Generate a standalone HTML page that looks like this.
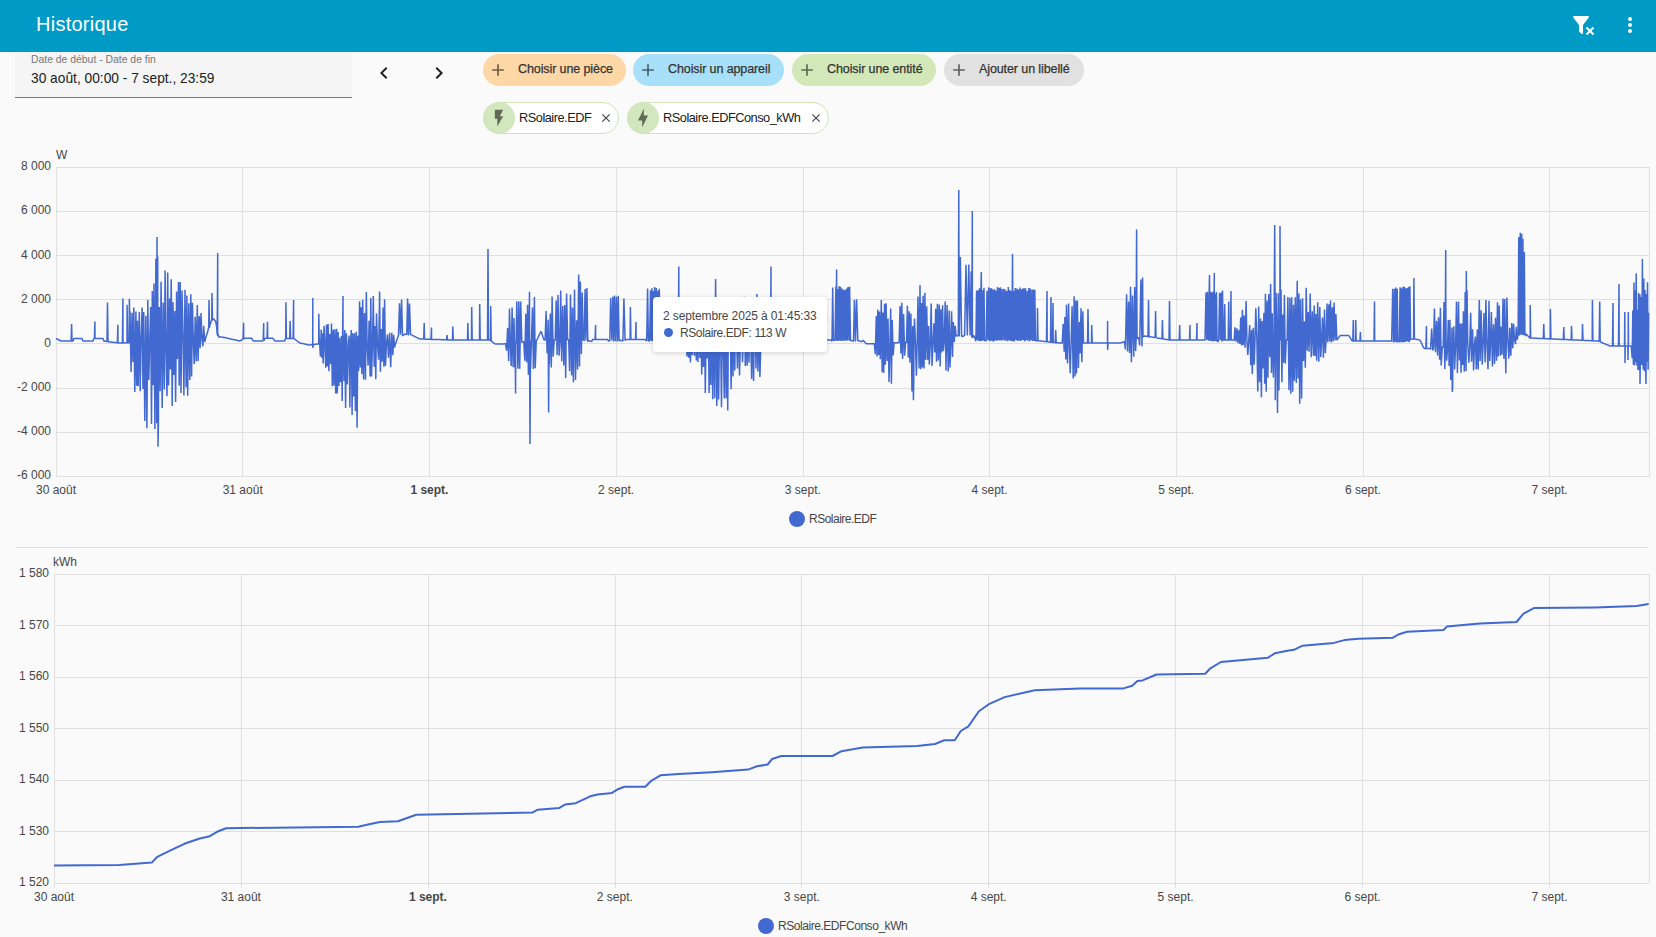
<!DOCTYPE html>
<html><head><meta charset="utf-8">
<style>
*{box-sizing:border-box}
html,body{margin:0;padding:0}
body{width:1656px;height:937px;overflow:hidden;background:#fafafa;font-family:"Liberation Sans",sans-serif;position:relative;color:#212121}
.hdr{position:absolute;left:0;top:0;width:1656px;height:52px;background:#009ac7}
.hdr .t{position:absolute;left:36px;top:12px;font-size:20px;line-height:24px;color:#fff;letter-spacing:0.25px}
.ic{position:absolute;width:24px;height:24px}
.ic svg{display:block;width:100%;height:100%}
.df{position:absolute;left:15px;top:52px;width:337px;height:46px;background:#f5f5f5;border-bottom:1px solid #7a7a7a}
.df .l{position:absolute;left:16px;top:1.5px;font-size:10.4px;color:#757575}
.df .v{position:absolute;left:16px;top:19px;font-size:13.75px;color:#212121}
.chip{position:absolute;height:32px;border-radius:16px;font-size:12.5px;line-height:31px;letter-spacing:-0.1px;color:#333;-webkit-text-stroke:0.25px #333}
svg{display:block}
.chip svg,.ent svg{width:100%;height:100%}
.chip .pl{position:absolute;left:4.8px;top:6px;width:20px;height:20px}
.chip .tx{position:absolute;left:35px;top:0}
.ent{position:absolute;height:32px;border-radius:16px;background:#fff;border:1px solid #cfe5b9;font-size:12.8px;line-height:29px;letter-spacing:-0.5px;color:#212121}
.ent .av{position:absolute;left:-1px;top:-1px;width:32px;height:32px;border-radius:16px;background:#d2e7bd}
.ent .av svg{position:absolute;left:6px;top:6px;width:20px;height:20px}
.ent .tx{position:absolute;left:35px;top:0}
.ent .x{position:absolute;top:8px;width:14px;height:14px}
svg.ch{position:absolute;left:0;top:0}
.grid line{stroke:#e0e0e0;stroke-width:1}
.lab{font-family:"Liberation Sans",sans-serif;font-size:12px;fill:#464646}
.tip{position:absolute;left:653px;top:297px;width:174px;height:55px;background:#fff;border-radius:4px;box-shadow:0 1px 5px rgba(0,0,0,.16);font-size:12px;color:#464646}
</style></head><body>
<div class="hdr">
  <div class="t">Historique</div>
  <div class="ic" style="left:1571px;top:13px"><svg viewBox="0 0 24 24"><path fill="#fff" d="M14.76,20.83L17.6,18L14.76,15.17L16.17,13.76L19,16.57L21.83,13.76L23.24,15.17L20.43,18L23.24,20.83L21.83,22.24L19,19.4L16.17,22.24L14.76,20.83M12,12V19.88C12.04,20.18 11.94,20.5 11.71,20.71C11.32,21.1 10.69,21.1 10.3,20.71L8.29,18.7C8.06,18.47 7.96,18.16 8,17.87V12H7.97L2.21,4.62C1.87,4.19 1.95,3.56 2.38,3.22C2.57,3.08 2.78,3 3,3H17C17.22,3 17.43,3.08 17.62,3.22C18.05,3.56 18.13,4.19 17.79,4.62L12.03,12H12Z"/></svg></div>
  <div class="ic" style="left:1618px;top:13px"><svg viewBox="0 0 24 24"><path fill="#fff" d="M12,16A2,2 0 0,1 14,18A2,2 0 0,1 12,20A2,2 0 0,1 10,18A2,2 0 0,1 12,16M12,10A2,2 0 0,1 14,12A2,2 0 0,1 12,14A2,2 0 0,1 10,12A2,2 0 0,1 12,10M12,4A2,2 0 0,1 14,6A2,2 0 0,1 12,8A2,2 0 0,1 10,6A2,2 0 0,1 12,4Z"/></svg></div>
</div>
<div class="df"><div class="l">Date de début - Date de fin</div><div class="v">30 août, 00:00 - 7 sept., 23:59</div></div>
<div class="ic" style="left:372px;top:60.5px"><svg viewBox="0 0 24 24"><path fill="#212121" d="M15.41,16.58L10.83,12L15.41,7.41L14,6L8,12L14,18L15.41,16.58Z"/></svg></div>
<div class="ic" style="left:427px;top:60.5px"><svg viewBox="0 0 24 24"><path fill="#212121" d="M8.59,16.58L13.17,12L8.59,7.41L10,6L16,12L10,18L8.59,16.58Z"/></svg></div>

<div class="chip" style="left:483px;top:54px;width:143px;background:#fed7a6"><div class="pl"><svg viewBox="0 0 24 24"><path fill="#6f5c43" d="M19,13H13V19H11V13H5V11H11V5H13V11H19V13Z"/></svg></div><div class="tx">Choisir une pièce</div></div>
<div class="chip" style="left:633px;top:54px;width:151px;background:#a8e0f9"><div class="pl"><svg viewBox="0 0 24 24"><path fill="#45606b" d="M19,13H13V19H11V13H5V11H11V5H13V11H19V13Z"/></svg></div><div class="tx">Choisir un appareil</div></div>
<div class="chip" style="left:792px;top:54px;width:144px;background:#d2e8b9"><div class="pl"><svg viewBox="0 0 24 24"><path fill="#5c6b50" d="M19,13H13V19H11V13H5V11H11V5H13V11H19V13Z"/></svg></div><div class="tx">Choisir une entité</div></div>
<div class="chip" style="left:944px;top:54px;width:140px;background:#e1e1e1"><div class="pl"><svg viewBox="0 0 24 24"><path fill="#5f5f5f" d="M19,13H13V19H11V13H5V11H11V5H13V11H19V13Z"/></svg></div><div class="tx">Ajouter un libellé</div></div>

<div class="ent" style="left:483px;top:102px;width:136px"><div class="av"><svg viewBox="0 0 24 24"><path fill="#5f6b55" d="M7,2V13H10V22L17,10H13L17,2H7Z"/></svg></div><div class="tx">RSolaire.EDF</div><div class="x" style="left:115px"><svg viewBox="0 0 24 24"><path fill="#444" d="M19,6.41L17.59,5L12,10.59L6.41,5L5,6.41L10.59,12L5,17.59L6.41,19L12,13.41L17.59,19L19,17.59L13.41,12L19,6.41Z"/></svg></div></div>
<div class="ent" style="left:627px;top:102px;width:202px"><div class="av"><svg viewBox="0 0 24 24"><path fill="#5f6b55" d="M11,15H6L13,1V9H18L11,23V15Z"/></svg></div><div class="tx">RSolaire.EDFConso_kWh</div><div class="x" style="left:181px"><svg viewBox="0 0 24 24"><path fill="#444" d="M19,6.41L17.59,5L12,10.59L6.41,5L5,6.41L10.59,12L5,17.59L6.41,19L12,13.41L17.59,19L19,17.59L13.41,12L19,6.41Z"/></svg></div></div>

<svg class="ch" width="1656" height="937" viewBox="0 0 1656 937">
 <g class="grid"><line x1="56" x2="1650" y1="167.50" y2="167.50"/><line x1="56" x2="1650" y1="211.50" y2="211.50"/><line x1="56" x2="1650" y1="255.50" y2="255.50"/><line x1="56" x2="1650" y1="299.50" y2="299.50"/><line x1="56" x2="1650" y1="343.50" y2="343.50"/><line x1="56" x2="1650" y1="388.50" y2="388.50"/><line x1="56" x2="1650" y1="432.50" y2="432.50"/><line x1="56" x2="1650" y1="476.50" y2="476.50"/><line x1="56.50" x2="56.50" y1="167" y2="476"/><line x1="242.50" x2="242.50" y1="167" y2="476"/><line x1="429.50" x2="429.50" y1="167" y2="476"/><line x1="616.50" x2="616.50" y1="167" y2="476"/><line x1="803.50" x2="803.50" y1="167" y2="476"/><line x1="989.50" x2="989.50" y1="167" y2="476"/><line x1="1176.50" x2="1176.50" y1="167" y2="476"/><line x1="1363.50" x2="1363.50" y1="167" y2="476"/><line x1="1549.50" x2="1549.50" y1="167" y2="476"/><line x1="1649.50" x2="1649.50" y1="167" y2="476"/><line x1="54" x2="1650" y1="574.50" y2="574.50"/><line x1="54" x2="1650" y1="625.50" y2="625.50"/><line x1="54" x2="1650" y1="677.50" y2="677.50"/><line x1="54" x2="1650" y1="728.50" y2="728.50"/><line x1="54" x2="1650" y1="780.50" y2="780.50"/><line x1="54" x2="1650" y1="831.50" y2="831.50"/><line x1="54" x2="1650" y1="883.50" y2="883.50"/><line x1="54.50" x2="54.50" y1="574" y2="888"/><line x1="241.50" x2="241.50" y1="574" y2="888"/><line x1="428.50" x2="428.50" y1="574" y2="888"/><line x1="615.50" x2="615.50" y1="574" y2="888"/><line x1="801.50" x2="801.50" y1="574" y2="888"/><line x1="988.50" x2="988.50" y1="574" y2="888"/><line x1="1175.50" x2="1175.50" y1="574" y2="888"/><line x1="1362.50" x2="1362.50" y1="574" y2="888"/><line x1="1549.50" x2="1549.50" y1="574" y2="888"/><line x1="1649.50" x2="1649.50" y1="574" y2="883"/></g>
 <line x1="15" x2="1649" y1="547.5" y2="547.5" stroke="#e0e0e0" stroke-width="1"/>
 <g class="lab"><text x="51" y="170.2" text-anchor="end">8 000</text><text x="51" y="214.3" text-anchor="end">6 000</text><text x="51" y="258.5" text-anchor="end">4 000</text><text x="51" y="302.6" text-anchor="end">2 000</text><text x="51" y="346.8" text-anchor="end">0</text><text x="51" y="390.9" text-anchor="end">-2 000</text><text x="51" y="435.1" text-anchor="end">-4 000</text><text x="51" y="479.2" text-anchor="end">-6 000</text><text x="49" y="577.2" text-anchor="end">1 580</text><text x="49" y="628.7" text-anchor="end">1 570</text><text x="49" y="680.2" text-anchor="end">1 560</text><text x="49" y="731.7" text-anchor="end">1 550</text><text x="49" y="783.2" text-anchor="end">1 540</text><text x="49" y="834.7" text-anchor="end">1 530</text><text x="49" y="886.2" text-anchor="end">1 520</text><text x="56.0" y="494" text-anchor="middle">30 août</text><text x="242.7" y="494" text-anchor="middle">31 août</text><text x="429.4" y="494" text-anchor="middle" font-weight="bold">1 sept.</text><text x="616.1" y="494" text-anchor="middle">2 sept.</text><text x="802.8" y="494" text-anchor="middle">3 sept.</text><text x="989.5" y="494" text-anchor="middle">4 sept.</text><text x="1176.2" y="494" text-anchor="middle">5 sept.</text><text x="1362.9" y="494" text-anchor="middle">6 sept.</text><text x="1549.6" y="494" text-anchor="middle">7 sept.</text><text x="54.0" y="901" text-anchor="middle">30 août</text><text x="240.9" y="901" text-anchor="middle">31 août</text><text x="427.9" y="901" text-anchor="middle" font-weight="bold">1 sept.</text><text x="614.8" y="901" text-anchor="middle">2 sept.</text><text x="801.8" y="901" text-anchor="middle">3 sept.</text><text x="988.7" y="901" text-anchor="middle">4 sept.</text><text x="1175.6" y="901" text-anchor="middle">5 sept.</text><text x="1362.6" y="901" text-anchor="middle">6 sept.</text><text x="1549.5" y="901" text-anchor="middle">7 sept.</text>
  <text x="56" y="159">W</text>
  <text x="53" y="566">kWh</text>
  <text x="809" y="523" letter-spacing="-0.5">RSolaire.EDF</text>
  <text x="778" y="930" letter-spacing="-0.45">RSolaire.EDFConso_kWh</text>
 </g>
 <circle cx="797" cy="519" r="8" fill="#4269d0"/>
 <circle cx="766" cy="926" r="8" fill="#4269d0"/>
 <polyline fill="none" stroke="#4269d0" stroke-width="1.5" stroke-linejoin="miter" stroke-miterlimit="2" points="56.0,338.5 57.0,339.0 58.0,339.5 59.0,340.0 60.0,340.5 61.0,341.0 62.0,341.0 63.0,341.0 64.0,341.0 65.0,341.0 66.0,341.0 67.0,341.0 68.0,341.0 69.0,341.0 70.0,341.0 71.0,341.0 71.1,341.0 71.6,324.0 72.0,341.0 72.1,341.0 73.0,341.0 74.0,338.5 75.0,338.5 76.0,338.5 77.0,338.5 78.0,338.5 79.0,338.5 80.0,338.5 81.0,338.5 82.0,338.5 83.0,341.0 84.0,341.0 85.0,341.0 86.0,341.0 87.0,341.0 88.0,341.0 89.0,341.0 90.0,341.0 91.0,341.0 92.0,341.0 93.0,341.0 94.0,338.5 94.4,338.5 94.9,321.4 95.0,338.5 95.4,338.5 96.0,338.5 97.0,338.5 98.0,338.5 99.0,338.5 100.0,338.5 101.0,338.5 102.0,338.5 103.0,338.5 104.0,341.0 105.0,341.2 106.0,341.3 107.0,341.5 107.0,341.6 107.5,302.4 108.0,341.6 108.0,341.7 109.0,341.8 110.0,342.0 111.0,342.1 112.0,342.2 113.0,342.3 114.0,342.4 115.0,342.5 116.0,342.6 117.0,342.7 117.4,342.8 117.9,324.8 118.0,342.8 118.4,342.8 119.0,342.9 120.0,343.0 121.0,343.0 122.0,342.9 122.4,342.9 122.9,298.4 123.0,342.9 123.4,342.9 124.0,342.9 125.0,342.8 126.0,342.8 126.6,342.7 127.0,342.8 127.1,304.8 127.6,342.7 128.0,342.7 128.9,342.7 129.0,342.7 129.4,298.8 129.9,342.7 130.0,311.2 131.1,371.9 132.0,312.7 133.0,361.9 133.8,307.4 134.8,391.9 135.9,311.5 136.7,385.8 137.5,320.7 138.2,386.3 139.3,311.9 140.2,391.3 141.0,342.3 142.1,307.4 143.0,389.1 143.7,312.0 144.8,421.1 145.8,315.8 146.9,428.2 147.8,300.0 148.8,379.9 149.7,342.0 150.7,306.9 151.5,424.1 152.3,290.9 153.1,385.2 154.0,283.4 154.9,429.0 155.9,258.7 156.5,341.7 156.7,423.2 157.0,237.0 157.5,341.7 157.5,341.7 157.7,256.4 158.0,446.7 158.5,418.7 158.5,341.7 159.3,307.1 160.1,391.2 161.1,281.8 162.2,407.9 163.2,302.5 164.3,389.6 165.1,270.4 165.9,341.4 167.0,396.3 167.7,272.5 168.6,385.6 169.6,298.6 170.4,369.6 171.2,279.2 172.2,406.0 173.0,301.9 173.9,375.0 174.8,310.9 175.6,402.1 176.6,291.6 177.4,359.1 178.5,281.9 179.2,385.8 180.2,282.0 181.0,392.9 182.0,290.5 183.1,340.8 183.9,395.6 185.0,289.7 186.1,387.3 186.9,295.5 187.7,395.7 188.8,303.2 189.8,380.0 190.8,294.3 191.6,376.4 192.4,302.8 193.3,340.4 194.2,364.1 195.2,316.7 196.2,361.5 197.3,305.1 198.1,361.1 199.2,315.9 200.1,348.3 201.0,313.1 202.0,340.1 202.9,346.3 203.7,325.8 204.7,342.0 205.7,337.8 206.7,334.8 207.7,331.8 208.5,328.0 208.7,328.8 209.0,300.0 209.5,328.0 209.7,325.8 210.7,323.3 211.5,320.3 211.7,321.0 212.0,293.0 212.5,320.3 212.7,318.7 213.7,319.0 214.7,320.3 215.7,321.6 216.7,327.4 217.2,334.7 217.7,253.0 217.7,334.9 218.2,334.7 218.7,337.0 219.7,337.0 220.7,337.0 221.7,337.0 222.7,337.2 223.7,337.4 224.7,337.6 225.7,337.8 226.7,338.0 227.7,338.3 228.7,338.5 229.7,338.7 230.7,338.9 231.7,339.2 232.7,339.4 233.7,339.6 234.7,339.8 235.7,340.0 236.7,340.3 237.7,340.5 238.7,340.7 239.7,340.9 240.7,340.5 241.7,339.8 242.7,339.2 243.1,338.6 243.6,322.7 243.7,338.5 244.1,338.6 244.7,338.3 245.7,338.3 246.7,338.3 247.7,338.3 248.7,338.3 249.7,338.3 250.7,338.3 251.7,338.3 252.7,340.2 253.7,341.0 254.7,341.0 255.7,341.0 256.7,341.0 257.7,341.0 258.7,341.0 259.7,341.0 260.7,341.0 261.7,341.0 262.7,341.0 263.2,340.1 263.7,323.1 263.7,340.0 264.2,340.1 264.7,338.7 265.7,338.3 266.7,338.3 267.0,338.3 267.5,321.8 267.7,338.3 268.0,338.3 268.7,338.3 269.7,338.3 270.7,338.3 271.7,338.3 272.7,338.3 273.7,339.3 274.7,340.6 275.7,341.0 276.7,341.0 277.7,341.0 278.7,341.0 279.7,341.0 280.7,341.0 281.7,341.0 282.7,341.0 283.7,341.0 284.7,341.0 285.4,338.8 285.7,339.2 285.9,302.2 286.4,338.8 286.7,338.5 287.7,338.5 288.7,338.5 289.6,338.5 289.7,338.5 290.1,321.0 290.6,338.5 290.7,338.5 291.7,338.5 292.7,338.5 293.1,338.5 293.6,300.1 293.7,338.5 294.1,338.5 294.7,339.0 295.7,339.8 296.7,340.5 297.7,341.3 298.7,342.0 299.7,342.8 300.7,343.2 301.7,343.4 302.7,343.6 303.7,343.8 304.7,344.0 305.7,344.3 306.7,344.5 307.7,344.7 308.7,344.9 309.7,344.9 310.7,344.8 311.7,344.7 312.3,344.6 312.3,344.6 312.7,344.6 312.8,297.9 312.8,348.0 313.3,344.6 313.3,344.6 313.7,344.5 314.7,344.4 315.7,344.3 316.7,344.1 317.7,344.0 318.3,344.0 318.7,344.0 318.8,313.7 319.3,344.0 319.5,339.9 320.4,356.4 321.2,329.5 321.9,358.0 322.5,333.2 323.2,363.5 324.0,325.9 324.9,344.1 325.8,367.7 326.5,324.4 327.3,366.3 328.1,324.0 328.9,371.2 329.8,333.9 330.8,364.3 331.5,323.4 332.3,386.2 333.2,329.8 334.0,385.6 334.9,329.2 335.7,393.6 336.6,328.8 337.3,393.6 338.1,332.0 338.9,385.9 339.6,337.7 340.5,382.3 341.4,336.0 342.2,401.1 342.5,344.3 343.0,296.0 343.0,331.9 343.5,344.3 344.0,381.3 344.8,330.0 345.6,408.0 346.4,333.2 347.3,384.5 348.3,344.4 349.1,335.6 349.9,407.6 350.5,344.4 351.3,330.0 352.1,415.0 352.8,333.3 353.8,396.4 354.5,333.2 355.4,410.9 356.2,331.8 357.1,427.7 357.8,335.7 358.6,370.9 359.6,301.2 360.3,367.5 361.1,307.3 361.9,374.1 362.7,299.8 363.6,379.6 364.5,313.1 365.5,379.8 366.3,292.1 367.1,344.6 368.1,365.6 369.1,320.7 370.1,376.6 370.8,298.0 371.5,376.6 372.5,344.7 373.3,296.1 374.2,366.8 374.9,325.9 375.8,379.2 376.5,313.2 377.5,344.8 378.6,359.8 379.6,291.4 380.4,371.7 381.3,328.9 382.2,361.7 383.1,307.6 383.9,366.7 384.6,299.2 385.5,365.8 386.4,344.9 387.4,334.5 388.5,357.7 389.6,332.7 390.7,367.3 391.8,332.7 392.9,355.1 393.7,334.8 394.5,347.5 395.5,343.7 396.5,341.0 397.5,338.2 398.5,335.5 399.5,303.3 400.5,334.5 401.6,299.5 402.5,335.5 403.6,335.1 404.8,334.0 405.8,334.4 406.8,334.1 407.6,298.4 408.5,335.4 409.5,303.5 410.5,334.3 411.5,334.8 412.5,335.3 413.5,335.8 414.5,336.3 415.5,336.8 416.5,337.3 417.5,337.8 418.5,338.3 419.5,338.8 420.5,339.0 421.5,339.0 422.5,339.1 423.5,339.1 423.7,339.1 424.2,323.0 424.5,339.1 424.7,339.1 425.5,339.2 426.5,339.2 427.5,339.2 428.5,339.3 429.5,339.3 430.5,339.3 431.0,339.4 431.5,327.6 431.5,339.4 432.0,339.4 432.5,339.4 433.5,339.4 434.5,339.5 435.5,339.5 436.5,339.5 437.5,339.5 438.5,339.6 439.5,339.6 440.5,339.6 441.5,339.7 442.5,339.7 443.5,339.7 444.5,339.8 445.5,339.8 446.5,339.8 446.5,339.8 447.0,335.0 447.5,339.8 447.5,339.9 448.5,339.9 449.5,339.9 450.5,340.0 451.5,340.0 452.3,340.0 452.5,340.0 452.8,326.5 453.3,340.0 453.5,340.0 454.5,340.0 455.5,340.0 456.5,340.0 457.5,340.0 458.5,340.0 459.5,340.0 460.5,340.0 461.5,340.0 462.5,340.0 463.5,340.0 464.5,340.0 465.5,340.0 466.5,340.0 467.3,340.0 467.5,340.0 467.8,323.0 468.3,340.0 468.5,340.0 469.5,340.0 470.5,340.0 471.2,340.0 471.5,340.0 471.7,307.0 472.2,340.0 472.5,340.0 473.5,340.0 474.5,340.0 475.5,340.0 476.5,340.0 477.5,340.0 478.5,340.0 479.2,340.0 479.5,340.0 479.7,304.0 480.2,340.0 480.5,340.0 481.5,340.0 482.5,340.0 483.5,340.0 484.5,340.0 485.5,340.0 486.5,340.0 487.5,340.0 487.5,340.0 488.0,249.0 488.5,340.0 488.5,340.0 489.5,340.0 490.2,340.6 490.5,340.4 490.7,306.0 491.2,340.6 491.5,341.2 492.5,342.0 493.5,342.8 494.5,343.6 495.5,344.0 496.5,344.0 497.5,344.0 498.5,344.0 499.5,344.0 500.5,344.0 501.5,344.0 502.5,344.0 503.5,343.9 504.5,343.8 505.5,343.7 506.6,350.6 507.6,328.1 508.7,361.1 509.5,308.5 510.3,343.1 511.2,366.0 512.1,307.5 513.1,367.3 514.0,318.1 514.8,367.5 515.1,342.5 515.6,393.6 515.7,342.5 516.1,342.5 516.8,301.2 517.9,368.8 518.8,301.5 519.7,368.8 520.7,301.4 521.8,341.8 522.8,341.7 523.8,341.6 524.8,360.8 525.8,313.7 526.6,362.3 527.6,304.7 528.4,374.7 529.5,291.7 529.5,340.8 530.0,444.0 530.5,340.8 530.6,368.3 531.4,340.7 532.5,307.5 533.4,369.0 534.4,296.9 535.2,368.3 536.3,340.1 537.1,339.7 538.1,337.5 539.1,335.2 540.1,333.0 541.1,331.3 542.1,334.3 543.1,337.3 544.1,340.0 545.1,340.0 546.1,311.1 547.1,353.2 548.1,340.0 548.2,319.7 548.6,412.6 549.1,340.0 549.3,364.5 550.3,313.4 551.3,367.4 552.1,296.6 553.2,356.6 554.2,339.9 555.2,339.9 556.2,300.5 557.1,355.0 558.0,295.1 559.1,355.8 560.0,339.9 560.7,290.5 561.7,361.2 562.8,306.1 563.8,365.5 564.8,304.9 565.7,377.9 566.6,293.4 567.6,339.8 568.7,339.8 569.6,371.3 570.5,294.6 571.6,375.4 572.5,307.6 573.4,382.2 574.5,289.4 575.5,380.1 576.6,320.3 577.6,369.4 578.7,274.6 579.5,366.5 580.3,281.6 581.4,354.0 582.2,292.6 583.1,339.7 584.1,340.3 585.1,289.1 585.9,340.5 586.9,288.0 587.8,341.1 588.8,340.6 589.7,341.0 590.7,341.3 591.7,341.4 592.6,339.6 593.6,339.6 594.6,339.5 595.1,339.5 595.6,325.0 595.6,339.5 596.1,339.5 596.6,339.5 597.6,339.5 598.6,339.5 599.6,339.5 600.6,339.5 601.6,339.5 602.6,339.5 603.6,339.5 604.6,339.5 605.6,339.5 606.6,339.5 607.6,339.5 608.6,341.1 609.8,340.6 610.7,298.0 611.9,340.6 612.8,296.7 613.7,341.5 614.5,295.5 615.5,341.2 616.4,296.8 617.4,341.4 618.2,295.7 619.1,340.4 620.2,340.3 621.1,340.4 621.9,340.5 622.9,341.2 623.9,298.5 625.1,340.5 626.1,339.5 627.1,339.5 628.1,339.5 629.1,339.5 629.9,339.5 630.1,339.5 630.4,307.0 630.9,339.5 631.1,339.5 632.1,339.5 633.1,339.5 634.1,339.5 635.1,339.5 635.5,339.5 636.0,322.0 636.1,339.5 636.5,339.5 637.1,339.5 638.1,339.5 639.1,339.5 640.1,339.5 641.1,339.5 642.1,339.5 643.1,339.5 644.1,339.6 645.1,339.6 646.1,340.7 646.7,340.1 647.6,288.5 648.4,340.8 649.1,341.0 649.7,340.0 650.5,290.2 651.3,340.9 651.9,288.3 652.6,341.3 653.3,291.0 654.0,340.8 654.6,287.0 655.5,341.3 656.3,288.1 657.1,340.1 657.9,290.8 658.6,341.3 659.3,288.7 660.2,340.1 661.0,339.8 662.0,339.8 663.0,339.8 664.0,339.8 665.0,339.8 666.0,339.8 667.0,339.8 668.0,339.9 669.0,339.9 670.0,339.9 671.0,339.9 672.0,339.9 673.0,339.9 674.0,339.9 675.0,339.9 676.0,340.0 677.0,340.0 678.0,340.0 678.3,340.0 678.8,266.5 679.0,340.0 679.3,340.0 680.0,340.0 681.0,340.0 682.0,340.0 683.0,340.0 684.0,340.0 685.0,340.0 686.0,323.4 687.0,356.6 687.8,330.8 688.7,357.7 689.5,329.3 690.4,362.4 691.5,333.0 692.3,354.9 693.3,332.8 694.4,355.9 695.3,320.8 696.3,360.6 697.1,322.4 698.0,362.0 699.0,312.9 699.9,358.1 700.7,312.6 701.7,374.5 702.7,325.6 703.5,367.1 704.4,306.7 705.3,393.1 706.3,315.3 707.2,358.6 708.1,303.5 709.1,393.1 709.9,314.8 710.8,384.9 711.8,303.7 712.7,399.3 713.8,312.8 714.7,398.3 715.1,340.0 715.6,279.0 715.8,303.4 716.1,340.0 716.8,406.1 717.8,322.0 718.6,399.4 719.5,340.0 720.4,319.5 721.5,407.3 722.4,305.2 723.2,340.0 724.3,398.6 725.1,312.2 726.2,398.3 727.2,340.0 727.2,304.5 727.7,410.4 728.0,379.2 728.2,340.0 729.1,340.0 730.1,301.0 731.1,389.3 732.1,314.5 733.0,376.4 734.0,303.9 734.8,370.5 735.8,299.8 736.5,340.0 737.5,368.5 738.5,297.3 739.5,375.4 740.5,340.0 741.4,301.3 742.5,362.2 743.4,340.0 744.2,296.8 745.3,365.9 746.3,299.7 747.1,365.7 748.0,321.3 749.0,362.8 749.8,310.6 750.6,340.0 751.7,378.9 752.6,311.7 753.6,381.1 754.4,316.7 755.3,340.0 756.0,368.5 756.9,293.9 757.9,371.4 758.9,324.2 759.9,376.9 761.0,340.0 761.9,310.7 763.0,340.0 764.0,340.0 765.0,340.0 766.0,340.0 767.0,340.0 768.0,340.0 769.0,340.0 770.0,340.0 770.5,340.0 771.0,266.5 771.0,340.0 771.5,340.0 772.0,340.0 773.0,340.0 774.0,340.0 775.0,340.0 776.0,340.0 777.0,340.0 778.0,340.0 779.0,340.0 780.0,340.0 781.0,340.0 782.0,340.0 783.0,340.0 784.0,340.0 785.0,340.0 786.0,340.0 787.0,340.0 788.0,340.0 789.0,340.0 790.0,340.0 791.0,340.0 792.0,340.0 793.0,340.0 794.0,340.0 795.0,340.0 796.0,340.0 797.0,340.0 798.0,340.0 799.0,340.0 800.0,340.0 801.0,340.0 802.0,340.0 803.0,340.0 804.0,340.0 805.0,340.0 806.0,340.0 807.0,340.0 808.0,340.0 809.0,340.0 810.0,340.0 811.0,340.0 812.0,340.0 813.0,340.0 814.0,340.0 815.0,340.0 816.0,340.0 817.0,340.0 818.0,340.0 819.0,340.0 820.0,340.0 821.0,340.0 822.0,340.0 823.0,340.0 824.0,340.0 825.0,340.0 826.0,340.0 827.0,340.0 828.0,340.0 829.0,340.0 830.0,340.0 831.0,340.0 832.0,341.3 832.7,287.4 833.4,340.3 834.3,340.3 835.0,340.3 835.9,286.4 836.1,340.2 836.6,269.6 836.7,340.5 837.1,340.2 837.6,288.9 838.2,341.0 839.1,286.3 839.7,340.5 840.5,286.7 841.2,341.0 842.0,288.6 842.9,340.9 843.6,289.7 844.4,340.4 845.1,289.9 845.9,340.8 846.6,288.4 847.3,340.4 848.1,287.1 849.0,340.4 849.6,286.7 850.5,340.6 851.5,340.6 852.5,340.7 853.5,341.5 854.4,300.0 855.5,341.4 856.6,299.2 857.8,340.5 859.0,340.8 860.1,341.3 861.3,341.4 862.2,341.2 863.2,340.4 864.3,341.4 865.3,342.8 866.3,343.8 867.3,343.8 868.3,343.8 869.3,343.8 870.3,343.8 871.3,343.8 872.3,343.8 873.3,343.8 874.3,343.8 875.3,354.3 876.3,316.0 877.1,356.4 877.8,309.4 878.7,355.0 879.4,311.6 880.3,359.3 881.3,300.1 882.2,372.2 883.0,312.6 883.7,373.1 884.6,303.7 885.3,364.7 886.1,303.3 887.1,361.1 888.0,318.6 889.0,382.0 890.0,343.1 890.7,308.5 891.4,383.8 892.2,319.9 893.1,355.5 894.1,342.9 895.1,342.8 896.1,342.8 897.1,342.7 898.1,342.7 899.1,342.6 900.1,305.9 900.9,353.4 901.8,302.7 902.6,359.0 903.6,314.0 904.6,355.8 905.6,342.3 906.5,342.3 907.4,305.7 908.3,357.4 909.2,311.3 909.9,362.4 910.9,313.6 912.0,391.4 912.8,326.1 912.9,342.0 913.4,400.2 913.8,377.9 913.9,342.0 914.5,318.5 915.4,341.9 916.4,375.7 917.2,341.8 918.0,296.6 919.1,368.5 920.0,285.1 920.8,369.2 921.6,302.9 922.4,367.5 923.1,295.8 924.0,368.5 924.9,292.8 925.7,360.1 926.7,306.3 927.7,359.7 928.6,325.9 929.3,364.5 930.4,341.2 931.2,303.5 932.0,366.0 933.1,341.1 933.9,323.3 934.8,352.4 935.7,308.7 936.5,361.7 937.4,303.7 938.3,360.5 939.2,304.4 940.2,366.6 940.9,309.3 941.7,352.6 942.6,305.2 943.4,351.1 944.3,340.5 945.2,301.5 946.0,370.4 947.1,305.1 948.2,371.5 949.2,310.5 950.0,367.6 950.9,340.2 951.6,311.3 952.5,356.9 953.3,322.0 954.3,341.9 955.2,325.9 956.1,336.0 957.5,335.8 958.3,335.1 958.8,190.0 959.1,336.5 959.3,335.1 960.3,256.9 961.6,336.1 963.1,336.4 964.6,335.2 966.0,264.7 967.3,335.4 968.8,264.5 970.1,335.5 971.2,271.3 971.8,337.7 972.3,211.0 972.4,335.1 972.8,337.7 973.5,335.2 974.9,338.0 975.9,341.2 976.6,290.5 977.4,340.1 978.1,290.2 978.8,341.1 979.5,288.3 980.2,341.1 980.8,338.3 981.0,289.3 981.3,272.0 981.8,341.1 981.8,338.3 982.5,290.2 983.2,340.6 984.0,287.7 984.6,340.9 985.4,340.2 986.2,340.6 987.0,290.7 987.9,340.1 988.7,287.2 989.4,341.1 990.3,288.3 990.9,340.8 991.6,288.2 992.5,341.3 993.1,289.5 994.0,341.5 994.7,289.2 995.5,340.2 996.2,290.7 996.8,340.7 997.5,287.1 998.2,340.2 999.0,287.9 999.7,340.5 1000.4,287.3 1001.3,340.5 1001.9,288.9 1002.8,340.3 1003.6,288.7 1004.5,340.6 1005.1,289.6 1005.9,340.4 1006.7,291.0 1007.5,341.3 1008.3,287.1 1008.9,340.2 1009.5,290.0 1010.2,340.8 1010.8,290.8 1011.4,340.8 1012.0,339.6 1012.3,289.9 1012.5,254.0 1013.0,341.2 1013.0,339.6 1013.8,290.9 1014.4,341.4 1015.2,288.0 1016.0,340.0 1016.8,288.6 1017.5,341.0 1018.3,289.6 1019.0,340.4 1019.9,287.4 1020.6,341.1 1021.3,289.2 1022.1,340.3 1022.7,288.4 1023.4,340.0 1024.1,288.3 1024.9,341.4 1025.6,288.3 1026.4,340.2 1027.3,290.9 1027.9,340.6 1028.7,288.1 1029.5,341.4 1030.2,288.4 1031.1,340.2 1031.9,289.6 1032.6,340.9 1033.4,289.5 1034.2,340.9 1034.8,289.8 1035.5,341.0 1036.2,340.5 1037.0,340.7 1037.2,340.6 1037.5,308.0 1038.0,340.7 1038.2,340.7 1039.2,340.8 1040.2,340.9 1041.2,341.0 1042.2,341.1 1043.2,341.3 1044.2,341.4 1045.2,341.5 1046.2,341.6 1046.5,341.6 1047.0,291.0 1047.2,341.7 1047.5,341.6 1048.2,341.8 1049.2,341.9 1050.2,342.0 1050.5,342.1 1051.0,297.0 1051.2,342.1 1051.5,342.1 1052.2,342.2 1052.5,342.3 1053.0,303.0 1053.2,342.3 1053.5,342.3 1054.2,342.4 1055.2,342.6 1055.2,342.5 1055.7,330.0 1056.2,342.6 1056.2,342.6 1057.2,342.7 1058.2,342.8 1059.2,342.9 1060.2,343.0 1061.2,343.0 1062.2,343.0 1063.2,323.9 1064.2,351.8 1064.9,316.9 1065.8,359.6 1066.5,304.7 1067.5,363.5 1068.6,303.5 1069.3,343.0 1070.2,373.3 1071.1,343.0 1072.1,306.3 1073.2,378.5 1074.1,296.2 1075.0,376.4 1075.8,300.5 1076.5,373.6 1077.4,300.4 1078.4,367.9 1079.4,322.0 1080.2,353.2 1081.0,308.2 1081.8,362.2 1082.8,311.3 1083.5,343.0 1084.5,343.0 1085.5,343.0 1086.5,343.0 1087.5,343.0 1087.5,343.0 1088.0,309.0 1088.5,343.0 1088.5,343.0 1089.5,343.0 1090.5,343.0 1091.2,343.0 1091.5,343.0 1091.7,325.0 1092.2,343.0 1092.5,343.0 1093.5,343.0 1094.5,343.0 1095.5,343.0 1096.5,343.0 1097.5,343.0 1098.5,343.0 1099.5,343.0 1100.5,343.0 1101.5,343.0 1102.5,343.0 1103.5,343.0 1104.5,343.0 1105.5,343.0 1106.5,343.0 1107.1,343.0 1107.1,343.0 1107.5,343.0 1107.6,321.0 1107.6,350.0 1108.1,343.0 1108.1,343.0 1108.5,343.0 1109.5,343.0 1110.5,343.0 1111.5,343.0 1112.5,343.0 1113.5,343.0 1114.5,343.0 1115.5,343.0 1116.5,343.0 1117.5,343.0 1118.5,343.0 1119.5,343.0 1120.5,342.9 1121.5,342.6 1122.5,342.3 1123.5,342.0 1124.5,341.7 1125.4,349.5 1126.6,294.3 1127.6,351.6 1128.6,301.5 1129.6,353.0 1130.5,286.7 1131.4,362.3 1132.5,295.5 1133.7,356.7 1134.7,287.1 1135.6,351.1 1136.1,338.4 1136.6,229.6 1136.8,292.4 1137.1,338.4 1137.8,338.0 1138.8,337.7 1139.7,345.3 1140.9,279.5 1142.0,346.5 1142.1,336.7 1142.6,277.6 1143.0,336.5 1143.1,336.7 1144.0,336.3 1145.0,336.0 1146.0,336.2 1147.0,336.3 1148.0,336.6 1148.0,336.5 1148.5,300.0 1149.0,336.6 1149.0,336.6 1150.0,336.8 1151.0,337.0 1152.0,337.1 1153.0,337.3 1154.0,337.4 1155.0,337.6 1155.1,337.7 1155.6,311.0 1156.0,337.8 1156.1,337.7 1157.0,337.9 1158.0,338.1 1159.0,338.2 1160.0,338.4 1161.0,338.6 1161.9,338.8 1162.0,338.7 1162.4,320.0 1162.9,338.8 1163.0,338.9 1164.0,339.0 1165.0,339.2 1166.0,339.4 1167.0,339.5 1168.0,339.7 1169.0,339.9 1169.0,339.8 1169.5,301.0 1170.0,339.9 1170.0,340.0 1171.0,340.0 1172.0,340.0 1173.0,340.0 1174.0,340.0 1175.0,340.0 1176.0,340.0 1177.0,340.0 1178.0,340.0 1179.0,340.0 1179.2,340.0 1179.7,325.0 1180.0,340.0 1180.2,340.0 1181.0,340.0 1182.0,340.0 1183.0,340.0 1184.0,340.0 1185.0,340.0 1186.0,340.0 1187.0,340.0 1188.0,340.0 1189.0,340.0 1189.5,340.0 1190.0,325.0 1190.0,340.0 1190.5,340.0 1191.0,340.0 1192.0,340.0 1193.0,340.0 1194.0,340.0 1195.0,340.0 1196.0,340.0 1196.5,340.0 1197.0,323.0 1197.0,340.0 1197.5,340.0 1198.0,340.0 1199.0,340.0 1200.0,340.0 1201.0,340.0 1202.0,340.0 1203.0,340.0 1204.0,340.0 1205.0,340.0 1206.0,292.4 1206.8,340.1 1207.5,291.8 1208.4,340.4 1209.0,340.0 1209.2,291.0 1209.5,275.0 1209.9,340.2 1210.0,340.0 1210.7,291.7 1211.4,341.2 1212.3,292.2 1212.9,341.3 1213.5,291.5 1213.8,340.0 1214.3,273.0 1214.3,341.0 1214.8,340.0 1215.0,293.8 1215.6,340.9 1216.4,291.9 1217.1,341.0 1217.8,341.5 1218.7,340.6 1219.6,292.8 1220.5,340.1 1221.2,292.6 1221.9,341.5 1222.5,290.6 1223.2,340.0 1224.2,340.0 1224.2,340.0 1224.7,304.0 1225.2,340.0 1225.2,340.0 1226.2,340.0 1227.2,340.0 1228.2,340.0 1228.2,340.0 1228.7,301.5 1229.2,340.0 1229.2,340.0 1230.2,340.0 1230.5,340.0 1231.0,291.0 1231.2,340.0 1231.5,340.0 1232.2,340.0 1233.2,340.0 1234.2,340.1 1235.0,327.2 1236.0,341.6 1237.0,328.3 1238.0,343.1 1239.0,330.0 1239.9,344.0 1240.7,317.5 1241.6,345.5 1242.4,309.8 1243.2,345.1 1244.1,315.5 1245.0,347.8 1246.1,301.1 1246.9,340.0 1247.8,354.9 1248.8,340.0 1249.7,325.1 1250.8,365.3 1251.6,329.9 1252.3,374.0 1253.3,327.8 1254.2,364.7 1255.0,340.0 1255.8,308.3 1256.9,340.0 1257.8,391.6 1258.7,306.6 1259.6,382.3 1260.5,318.4 1261.4,397.2 1262.1,321.1 1263.0,368.5 1263.9,312.7 1264.7,383.8 1265.4,293.7 1266.2,391.7 1267.1,300.6 1267.9,377.7 1268.8,294.0 1269.8,357.3 1270.6,283.9 1271.5,373.0 1272.3,313.2 1273.4,377.5 1274.2,340.0 1274.3,284.4 1274.7,225.0 1275.2,340.0 1275.3,400.3 1276.0,292.7 1277.0,340.0 1277.1,363.8 1277.5,413.0 1278.0,340.0 1278.2,293.3 1278.9,390.5 1279.5,340.0 1279.9,340.0 1280.0,226.0 1280.5,340.0 1281.0,289.6 1281.9,382.2 1282.8,314.6 1283.6,362.7 1284.4,295.1 1285.3,363.6 1286.2,340.0 1287.1,340.0 1287.9,297.0 1289.0,390.0 1289.9,297.8 1290.8,393.8 1291.7,297.2 1292.7,391.8 1293.5,304.8 1294.4,380.7 1295.3,297.2 1296.3,383.0 1297.2,280.8 1298.1,378.6 1298.9,293.5 1299.7,403.8 1300.6,299.2 1301.6,398.6 1302.6,298.2 1303.5,361.1 1304.3,321.4 1305.3,367.8 1306.2,287.7 1307.2,350.7 1308.2,311.9 1309.1,351.7 1310.2,293.6 1311.2,357.3 1312.3,311.2 1313.4,355.8 1314.2,305.6 1315.0,355.9 1315.8,314.1 1316.7,360.8 1317.7,302.2 1318.8,361.8 1319.8,307.1 1320.8,357.1 1321.6,340.0 1322.5,317.6 1323.4,357.8 1324.5,309.4 1325.3,353.2 1326.1,340.0 1327.1,303.5 1327.8,342.2 1328.9,304.2 1329.7,341.4 1330.5,300.6 1331.4,342.4 1332.4,307.3 1333.2,341.2 1334.1,302.4 1335.0,340.4 1335.9,314.1 1336.8,340.0 1337.7,339.0 1338.7,337.5 1339.7,336.0 1340.7,335.6 1341.7,335.6 1342.7,335.6 1343.7,335.6 1344.7,335.6 1345.7,335.6 1346.7,335.6 1347.7,335.6 1348.7,335.6 1349.7,336.9 1350.7,338.7 1351.7,340.5 1352.7,341.0 1352.8,341.0 1353.3,320.0 1353.7,341.0 1353.8,341.0 1354.7,341.0 1355.2,341.0 1355.7,341.0 1355.7,320.0 1356.2,341.0 1356.7,341.0 1357.7,341.0 1358.7,341.0 1359.7,341.0 1359.9,341.0 1360.4,332.0 1360.7,341.0 1360.9,341.0 1361.7,341.0 1362.7,341.0 1363.7,341.0 1364.7,341.0 1365.7,341.0 1366.7,341.0 1367.7,341.0 1368.7,341.0 1369.7,341.0 1370.7,341.0 1371.7,341.0 1372.7,341.0 1373.7,341.0 1374.0,341.0 1374.5,301.5 1374.7,341.0 1375.0,341.0 1375.7,341.0 1376.7,341.0 1377.7,341.0 1378.7,341.0 1379.7,341.0 1380.7,341.0 1381.7,341.0 1382.7,341.0 1383.7,341.0 1384.7,341.0 1385.7,341.0 1386.7,341.0 1387.7,341.0 1388.7,341.0 1389.7,341.0 1390.7,341.0 1391.7,341.0 1392.7,288.8 1393.6,342.4 1394.5,288.7 1395.1,341.7 1395.8,287.5 1396.6,342.4 1397.2,288.8 1397.8,341.2 1398.7,341.0 1399.3,342.2 1400.1,287.3 1400.9,342.2 1401.5,288.2 1402.4,342.3 1403.1,286.4 1403.7,342.2 1404.4,287.1 1405.1,342.0 1405.8,288.5 1406.5,341.2 1407.1,288.1 1407.8,341.4 1408.6,287.1 1409.3,342.3 1409.9,286.2 1410.6,339.3 1411.6,339.2 1412.6,339.1 1413.4,339.0 1413.6,339.0 1413.9,278.0 1414.4,339.0 1414.6,339.1 1415.6,339.3 1416.6,339.4 1417.6,339.6 1418.6,339.8 1419.6,339.9 1420.6,341.3 1421.6,343.4 1422.6,345.6 1423.6,347.7 1424.6,348.5 1425.6,348.5 1425.9,348.5 1426.4,326.0 1426.6,348.5 1426.9,348.5 1427.6,348.5 1428.6,348.5 1429.6,348.5 1430.6,348.9 1431.7,328.5 1432.7,350.5 1433.6,348.2 1434.4,308.6 1435.5,352.2 1436.6,320.9 1437.6,355.4 1438.5,317.3 1439.6,359.7 1440.4,307.8 1441.2,365.4 1442.3,347.3 1443.2,347.2 1444.0,301.9 1444.8,369.1 1445.2,347.0 1445.7,250.0 1445.8,298.9 1446.2,347.0 1446.7,360.7 1447.6,346.8 1448.3,319.9 1449.1,366.1 1449.9,319.7 1450.8,380.1 1451.8,346.3 1451.9,327.6 1452.3,392.0 1452.7,386.8 1452.8,346.3 1453.8,326.3 1454.6,369.5 1455.6,346.0 1456.5,301.4 1457.4,372.9 1458.5,301.7 1459.4,360.6 1460.2,323.5 1461.0,372.8 1461.9,323.6 1462.7,365.1 1463.4,311.2 1464.3,371.7 1465.2,291.9 1465.8,345.0 1466.1,371.0 1466.3,271.0 1466.8,345.0 1467.0,289.9 1467.8,344.8 1468.9,362.7 1469.8,344.6 1470.7,312.8 1471.5,361.8 1472.6,329.3 1473.6,370.4 1474.5,344.2 1475.4,336.5 1476.3,369.3 1477.3,329.4 1478.2,369.5 1479.3,300.0 1480.1,361.0 1481.1,310.2 1482.2,364.7 1483.1,343.3 1484.0,312.7 1485.1,362.6 1485.9,300.0 1486.9,342.9 1488.0,369.3 1489.0,300.7 1489.8,361.0 1490.6,342.6 1491.4,312.1 1492.4,366.6 1493.5,324.3 1494.5,364.0 1495.5,317.7 1496.5,360.7 1497.5,302.2 1498.2,356.4 1499.2,305.5 1500.3,355.7 1501.2,326.7 1502.0,354.8 1503.0,298.5 1503.9,358.7 1504.7,298.9 1505.8,373.6 1506.9,297.5 1507.8,340.9 1508.9,358.6 1509.8,327.7 1510.8,355.8 1511.8,323.0 1512.8,348.3 1513.6,323.7 1514.5,340.2 1515.5,344.1 1516.3,326.8 1517.1,339.8 1518.1,334.6 1518.8,237.1 1519.5,335.4 1520.3,232.8 1521.1,334.8 1521.7,233.7 1522.3,334.8 1522.9,238.8 1523.6,335.2 1524.3,251.9 1524.9,334.2 1525.6,335.3 1526.2,334.2 1527.2,335.2 1528.2,336.2 1529.2,337.2 1529.7,338.0 1530.2,338.0 1530.2,305.0 1530.7,338.0 1531.2,338.1 1532.2,338.1 1533.2,338.1 1534.2,338.2 1535.2,338.2 1536.2,338.3 1537.2,338.3 1538.2,338.4 1539.2,338.4 1540.2,338.4 1541.2,338.5 1542.2,338.5 1543.2,338.6 1543.3,338.6 1543.8,324.0 1544.2,338.6 1544.3,338.6 1545.2,338.7 1546.2,338.7 1547.2,338.8 1548.2,338.8 1549.2,338.8 1549.9,338.9 1550.2,338.9 1550.4,309.0 1550.9,338.9 1551.2,338.9 1552.2,339.0 1553.2,339.0 1554.2,339.1 1555.2,339.1 1556.2,339.2 1557.2,339.2 1558.2,339.2 1559.2,339.3 1560.2,339.3 1561.2,339.4 1562.2,339.4 1563.2,339.5 1563.3,339.5 1563.8,327.0 1564.2,339.5 1564.3,339.5 1565.2,339.6 1566.2,339.6 1567.2,339.6 1568.2,339.7 1569.2,339.7 1570.2,339.8 1571.0,339.8 1571.2,339.8 1571.5,326.0 1572.0,339.8 1572.2,339.9 1573.2,339.9 1574.2,339.9 1575.2,340.0 1576.2,340.0 1577.2,340.1 1578.2,340.1 1579.2,340.2 1580.2,340.2 1581.2,340.3 1582.0,340.3 1582.2,340.3 1582.5,324.0 1583.0,340.3 1583.2,340.3 1584.2,340.4 1585.2,340.4 1586.2,340.5 1587.2,340.5 1588.2,340.6 1589.2,340.6 1590.2,340.7 1591.2,340.7 1591.9,340.8 1592.2,340.7 1592.4,300.0 1592.9,340.8 1593.2,340.8 1594.2,340.8 1595.2,340.9 1596.2,340.9 1597.2,341.0 1598.2,341.1 1599.2,341.5 1599.2,341.7 1599.7,301.5 1600.2,341.9 1600.2,341.7 1601.2,342.3 1602.2,342.7 1603.2,343.2 1604.2,343.6 1605.2,344.0 1606.2,344.4 1607.2,344.8 1608.2,345.2 1609.2,345.7 1610.2,346.0 1611.2,346.0 1612.2,346.0 1612.5,346.0 1613.0,303.0 1613.2,346.0 1613.5,346.0 1614.2,346.0 1615.2,346.0 1616.2,346.0 1617.2,346.0 1618.2,346.0 1618.5,346.0 1619.0,284.0 1619.2,346.0 1619.5,346.0 1620.2,346.0 1621.2,346.0 1622.2,346.0 1623.2,346.0 1624.2,346.0 1624.3,346.0 1624.5,346.0 1624.8,312.0 1625.0,363.0 1625.2,346.0 1625.3,346.0 1625.5,346.0 1626.2,346.0 1627.2,346.0 1627.5,346.0 1627.8,346.0 1628.0,360.0 1628.2,346.0 1628.3,312.0 1628.5,346.0 1628.8,346.0 1629.2,346.0 1630.2,346.0 1631.2,346.0 1632.2,358.3 1632.8,310.5 1633.4,364.8 1634.0,282.5 1634.6,365.4 1635.1,290.4 1635.6,361.9 1636.2,273.2 1636.9,365.6 1637.4,310.0 1638.0,370.0 1638.6,293.0 1639.3,370.2 1639.5,343.2 1639.9,294.2 1640.0,384.0 1640.5,343.2 1640.5,362.5 1641.2,297.1 1641.8,365.0 1641.9,342.3 1642.4,259.0 1642.5,293.1 1642.9,342.3 1643.2,369.2 1643.8,278.6 1644.3,370.9 1645.0,289.9 1645.5,341.1 1645.6,368.0 1646.0,384.0 1646.2,294.0 1646.5,341.1 1646.9,361.9 1647.5,282.3 1648.1,369.7 1648.6,312.8"/>
 <polyline fill="none" stroke="#4269d0" stroke-width="2" stroke-linejoin="round" points="54.0,865.5 119.2,865.0 151.8,862.6 157.3,856.8 170.0,850.6 184.4,843.8 198.9,838.7 209.8,836.2 217.0,831.8 226.0,828.2 358.3,826.7 369.2,824.2 380.0,822.0 398.0,821.3 416.3,814.8 532.3,812.6 537.7,809.7 559.4,807.9 564.9,804.6 575.7,803.2 590.2,796.3 597.5,794.5 612.0,792.9 618.0,789.2 624.2,786.8 645.3,786.8 651.3,780.8 660.4,775.3 678.5,774.1 711.7,772.3 748.0,769.6 757.0,766.3 767.6,764.5 772.1,759.0 781.2,756.0 832.5,756.0 841.5,751.2 862.7,747.6 917.0,746.0 935.1,744.0 944.2,740.3 954.8,740.3 960.8,731.0 968.4,726.4 978.9,711.3 989.5,703.8 1004.6,697.1 1034.8,690.2 1080.0,688.6 1123.5,688.4 1132.2,685.7 1137.4,681.1 1142.6,680.4 1156.5,674.5 1205.2,673.8 1210.4,668.3 1220.9,662.0 1267.8,657.8 1274.8,653.3 1288.7,650.5 1293.9,649.8 1302.6,645.7 1316.5,644.6 1333.9,642.9 1344.3,640.1 1358.3,638.7 1393.0,637.7 1398.3,634.5 1407.0,631.7 1443.5,630.0 1447.0,626.5 1466.0,624.8 1480.0,623.4 1516.5,622.0 1523.5,613.7 1533.9,608.1 1594.8,607.4 1636.5,606.0 1648.7,603.9"/>
</svg>
<div class="tip"><div style="position:absolute;left:10px;top:11.5px;letter-spacing:-0.12px">2 septembre 2025 à 01:45:33</div><div style="position:absolute;left:10.5px;top:30.5px;width:9px;height:9px;border-radius:5px;background:#4269d0"></div><div style="position:absolute;left:27px;top:29px;letter-spacing:-0.4px">RSolaire.EDF: 113 W</div></div>
</body></html>
